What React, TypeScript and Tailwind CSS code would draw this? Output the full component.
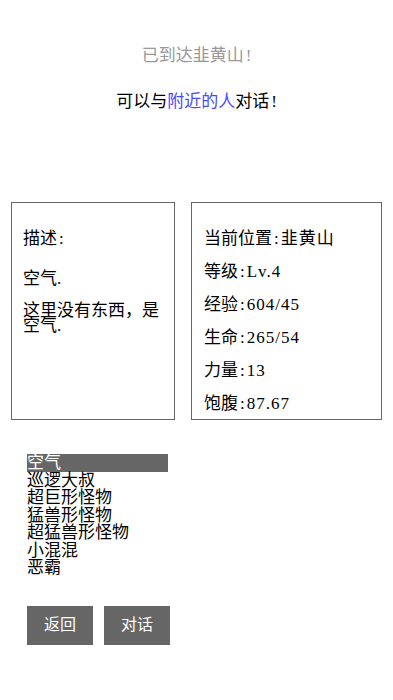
const FONT = "font-['Liberation_Serif','Noto_Sans_CJK_SC',serif]";

const stats = [
  { label: "当前位置", value: "韭黄山" },
  { label: "等级", value: "Lv.4" },
  { label: "经验", value: "604/45" },
  { label: "生命", value: "265/54" },
  { label: "力量", value: "13" },
  { label: "饱腹", value: "87.67" },
];

const npcs = ["空气", "巡逻大叔", "超巨形怪物", "猛兽形怪物", "超猛兽形怪物", "小混混", "恶霸"];

function Colon() {
  return <span className="px-[2px]">:</span>;
}

export default function App() {
  const selected = 0;

  return (
    <div className={`w-full min-h-[700px] bg-white text-black ${FONT}`}>
      <p className="pt-[44px] text-center text-[17px] leading-[24px] text-[#999]">
        已到达韭黄山<span className="pl-[2px]">!</span>
      </p>
      <p className="mt-[22px] text-center text-[17px] leading-[24px]">
        可以与<span className="text-[#4a4aff]">附近的人</span>对话<span className="pl-[2px]">!</span>
      </p>

      <div className="mt-[88px] grid grid-cols-[164px_191px] gap-[16px] px-[11px]">
        <div className="h-[218px] border border-[#666] px-[11px] pt-[28px] text-[17px] leading-[16px]">
          <p>
            描述<Colon />
          </p>
          <p className="mt-[24px]">空气.</p>
          <p className="mt-[16px] leading-[15px]">这里没有东西，是空气.</p>
        </div>
        <div className="h-[218px] border border-[#666] pl-[12px] pt-[19px] text-[17px] leading-[33px]">
          {stats.map((s) => (
            <p key={s.label}>
              {s.label}
              <Colon />
              <span className="tracking-[1px]">{s.value}</span>
            </p>
          ))}
        </div>
      </div>

      <ul className="mt-[34px] ml-[27px] w-[141px] text-[17px] leading-[17.5px]">
        {npcs.map((name, i) => (
          <li
            key={name}
            className={i === selected ? "h-[17.5px] bg-[#666] text-white" : "h-[17.5px]"}
          >
            {name}
          </li>
        ))}
      </ul>

      <div className="mt-[29px] flex gap-[11px] pl-[27px]">
        <button className="h-[39px] w-[66px] bg-[#666] text-[16px] text-white">返回</button>
        <button className="h-[39px] w-[66px] bg-[#666] text-[16px] text-white">对话</button>
      </div>
    </div>
  );
}
